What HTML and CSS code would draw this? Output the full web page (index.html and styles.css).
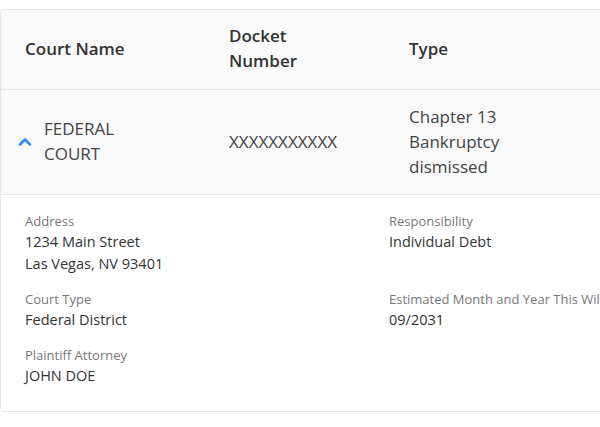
FILE: index.html
```
<!DOCTYPE html>
<html>
<head>
<meta charset="utf-8">
<link rel="stylesheet" href="styles.css">
</head>
<body>
<div class="card">
  <div class="head">
    <div class="c1">Court Name</div>
    <div class="c2">Docket<br>Number</div>
    <div class="c3">Type</div>
  </div>
  <div class="row">
    <div class="c1 name">
      <svg class="chev" width="14" height="9" viewBox="0 0 14 9"><path d="M2 7.5 L7 2.5 L12 7.5" fill="none" stroke="#2f8ee6" stroke-width="2.6" stroke-linecap="round" stroke-linejoin="round"/></svg>
      <span>FEDERAL<br>COURT</span>
    </div>
    <div class="c2">XXXXXXXXXXX</div>
    <div class="c3">Chapter 13<br>Bankruptcy<br>dismissed</div>
  </div>
  <div class="details">
    <div class="field">
      <div class="label">Address</div>
      <div class="value">1234 Main Street<br>Las Vegas, NV 93401</div>
    </div>
    <div class="field">
      <div class="label">Responsibility</div>
      <div class="value">Individual Debt</div>
    </div>
    <div class="field">
      <div class="label">Court Type</div>
      <div class="value">Federal District</div>
    </div>
    <div class="field">
      <div class="label">Estimated Month and Year This Will Be Removed</div>
      <div class="value">09/2031</div>
    </div>
    <div class="field">
      <div class="label">Plaintiff Attorney</div>
      <div class="value">JOHN DOE</div>
    </div>
  </div>
</div>
</body>
</html>
```

FILE: styles.css
```
html, body {
  margin: 0;
  padding: 0;
  background: #ffffff;
  overflow: hidden;
}
body {
  font-family: "Open Sans", Lato, sans-serif;
  color: #333;
  padding-top: 9px;
}
.card {
  width: 680px;
  border: 1px solid #e4e4e4;
  border-radius: 4px;
  overflow: hidden;
  box-sizing: border-box;
}
.head, .row {
  display: flex;
  align-items: center;
  background: #f9f9f9;
  font-size: 17px;
  line-height: 25px;
}
.head {
  padding: 13px 0 16px;
  font-weight: 600;
  color: #333;
  border-bottom: 1px solid #e6e6e6;
}
.row {
  padding: 14px 0 15px;
  color: #444;
  border-bottom: 1px solid #e2e6eb;
}
.c1 {
  width: 228px;
  padding-left: 24px;
  box-sizing: border-box;
}
.c2 {
  width: 180px;
}
.c3 {
  width: 200px;
}
.name {
  display: flex;
  align-items: center;
  padding-left: 17px;
}
.name span {
  margin-top: -2px;
}
.chev {
  display: block;
  margin-right: 12px;
}
.details {
  display: grid;
  grid-template-columns: 364px 1fr;
  row-gap: 14px;
  padding: 16px 24px 24px;
  background: #fff;
}
.label {
  font-size: 13px;
  line-height: 20px;
  color: #777;
  white-space: nowrap;
}
.value {
  font-size: 14.5px;
  line-height: 22px;
  color: #333;
}
```
